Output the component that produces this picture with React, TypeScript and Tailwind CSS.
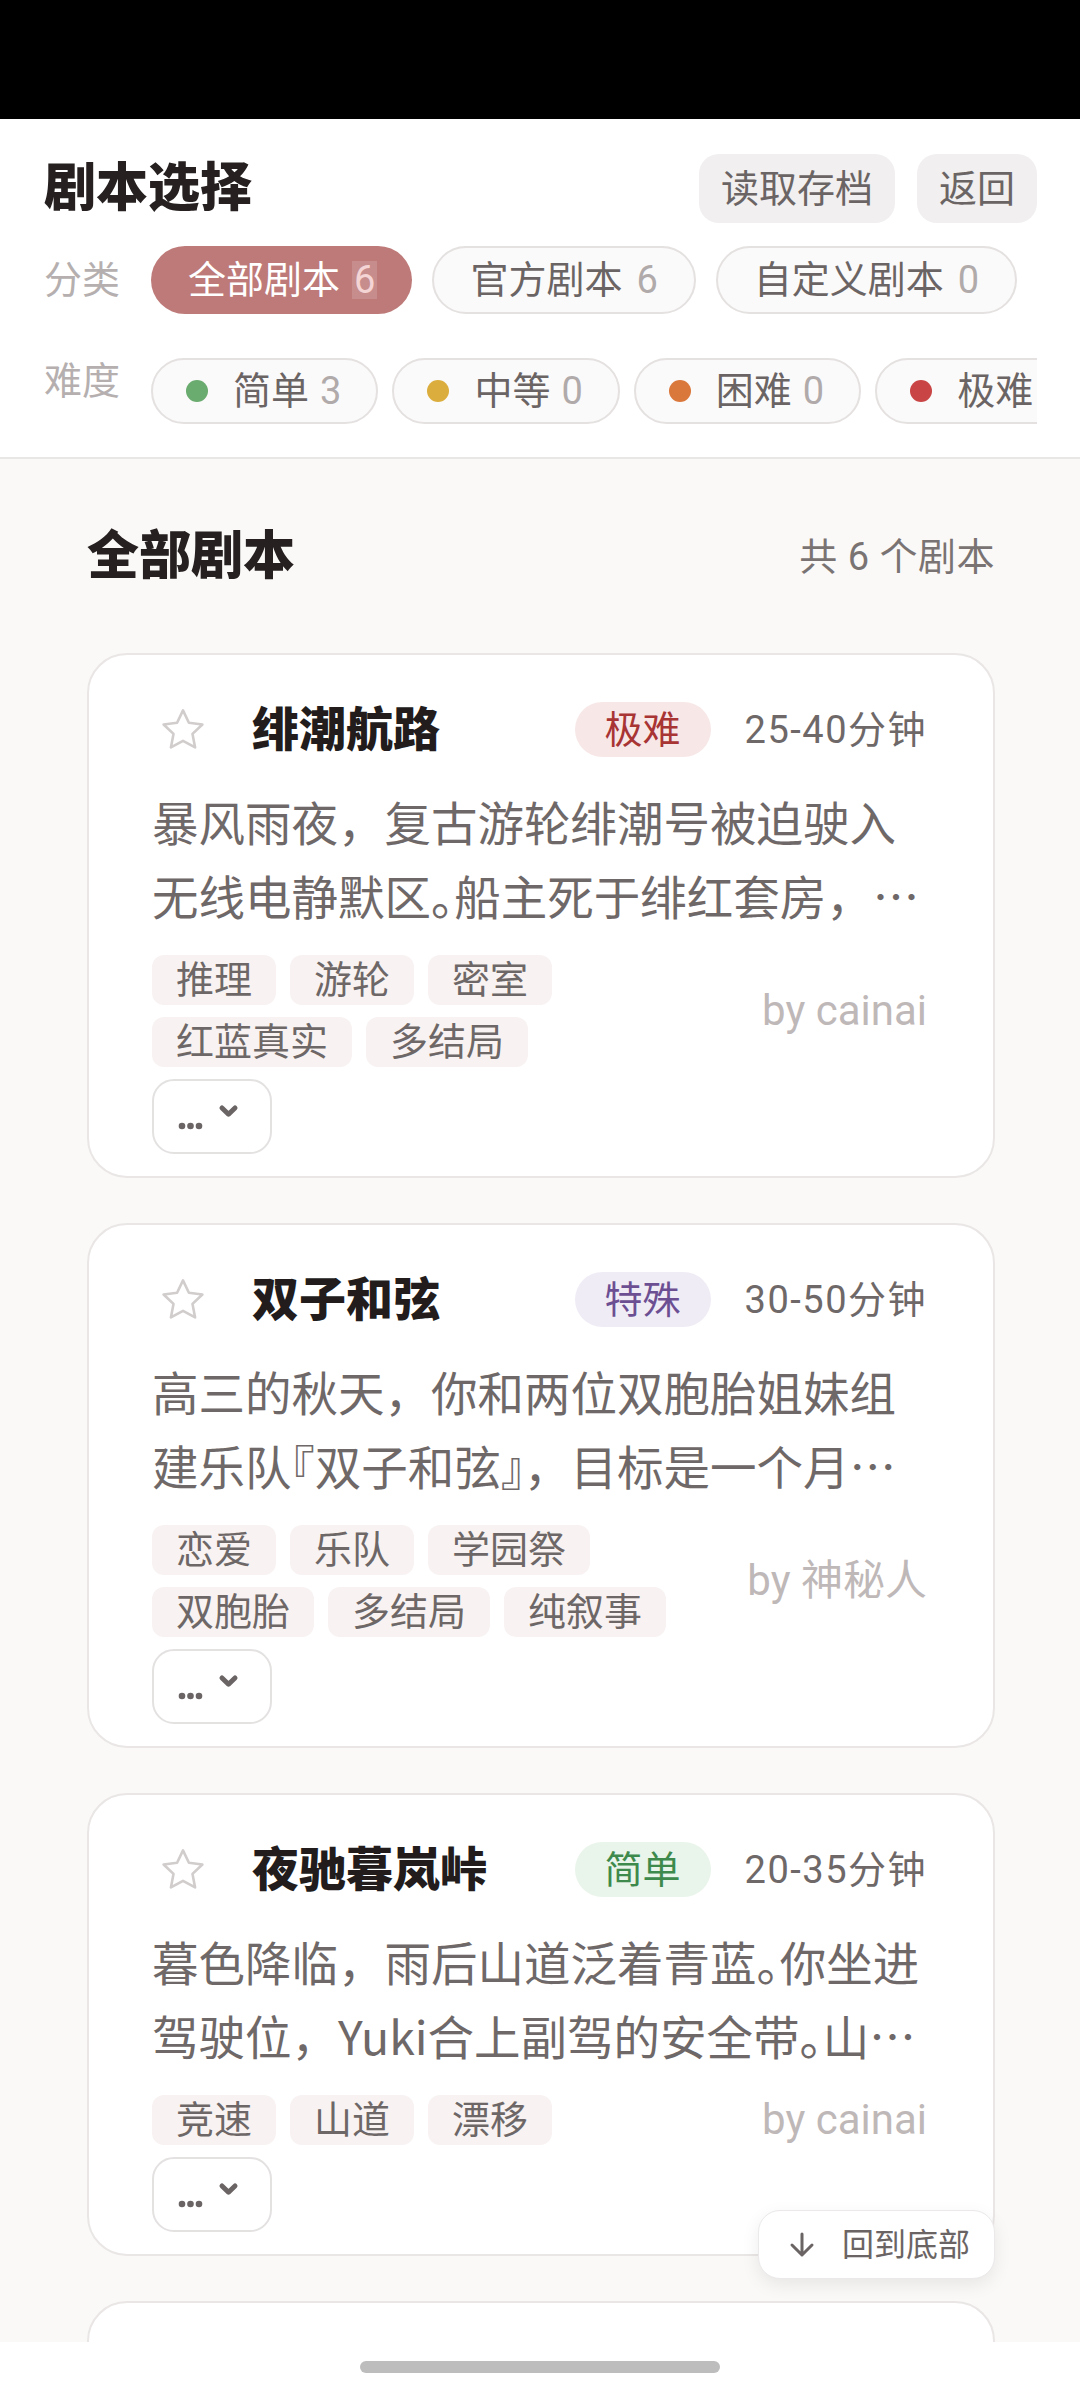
import React from "react";

type Script = {
  title: string;
  diff: string;
  diffCls: string;
  dur: string;
  desc: string;
  tags: string[];
  author: string;
};

const scripts: Script[] = [
  {
    title: "绯潮航路",
    diff: "极难",
    diffCls: "bg-[#f7e7e7] text-[#a83434]",
    dur: "25-40分钟",
    desc: "暴风雨夜，复古游轮绯潮号被迫驶入无线电静默区。船主死于绯红套房，所有人都有嫌疑，真相藏在暴风雨之中。",
    tags: ["推理", "游轮", "密室", "红蓝真实", "多结局"],
    author: "by cainai",
  },
  {
    title: "双子和弦",
    diff: "特殊",
    diffCls: "bg-[#f0ecf6] text-[#6c4f92]",
    dur: "30-50分钟",
    desc: "高三的秋天，你和两位双胞胎姐妹组建乐队『双子和弦』，目标是一个月后的学园祭演出。",
    tags: ["恋爱", "乐队", "学园祭", "双胞胎", "多结局", "纯叙事"],
    author: "by 神秘人",
  },
  {
    title: "夜驰暮岚峠",
    diff: "简单",
    diffCls: "bg-[#e9f4ea] text-[#3e8a4c]",
    dur: "20-35分钟",
    desc: "暮色降临，雨后山道泛着青蓝。你坐进驾驶位，Yuki合上副驾的安全带。山顶的终点线在等待着你们。",
    tags: ["竞速", "山道", "漂移"],
    author: "by cainai",
  },
  {
    title: "雾港来信",
    diff: "中等",
    diffCls: "bg-[#faf1dc] text-[#a67b16]",
    dur: "25-35分钟",
    desc: "一封没有署名的信把你带回了雾气弥漫的港口小镇。",
    tags: ["悬疑", "小镇"],
    author: "by cainai",
  },
];

function Star() {
  return (
    <svg width="48" height="48" viewBox="0 0 24 24" fill="none" stroke="#d2cdcd" strokeWidth="1.3" strokeLinejoin="round">
      <path d="M12 2.2l2.95 6.2 6.75.85-4.95 4.7 1.3 6.75L12 17.4l-6.05 3.3 1.3-6.75-4.95-4.7 6.75-.85z" />
    </svg>
  );
}

function Desc({ text }: { text: string }) {
  const parts = text.split(/([。『』])/);
  return (
    <p className="mt-[27px] font-['Noto_Sans_CJK_SC','Roboto',sans-serif] text-[46.5px] leading-[74px] text-[#6f6868] line-clamp-2">
      {parts.map((p, i) =>
        /^[。『』]$/.test(p) ? (
          <span key={i} className="[font-feature-settings:'halt']">
            {p}
          </span>
        ) : (
          <React.Fragment key={i}>{p}</React.Fragment>
        )
      )}
    </p>
  );
}

function Card({ s }: { s: Script }) {
  return (
    <div className="shrink-0 bg-white border-2 border-[#e9e6e5] rounded-[40px] pt-[47px] pb-[22px] pl-[63px] pr-[66px]">
      <div className="flex items-center h-[55px]">
        <div className="ml-[7px] w-[48px] h-[48px] shrink-0">
          <Star />
        </div>
        <h2 className="ml-[45px] flex-1 text-[47px] font-black text-[#221c1c] leading-none whitespace-nowrap">
          {s.title}
        </h2>
        <span className={`h-[55px] px-[30px] rounded-full flex items-center text-[38px] leading-none ${s.diffCls}`}>
          {s.diff}
        </span>
        <span className="ml-[34px] text-[38px] tracking-[1.5px] text-[#6e6868] leading-none whitespace-nowrap">{s.dur}</span>
      </div>
      <Desc text={s.desc} />
      <div className="mt-[23px] flex items-center gap-[30px]">
        <div className="flex-1 flex flex-wrap gap-x-[14px] gap-y-[12px]">
          {s.tags.map((t) => (
            <span
              key={t}
              className="h-[50px] px-[24px] rounded-[12px] bg-[#f8f3f2] text-[38px] leading-[50px] text-[#6e6767] flex items-center"
            >
              {t}
            </span>
          ))}
        </div>
        <span className="shrink-0 text-[42px] leading-none text-[#bfb8b8]">{s.author}</span>
      </div>
      <button className="mt-[12px] w-[120px] h-[75px] border-2 border-[#e4e1e1] rounded-[22px] flex items-center justify-center pr-[6px]">
        <svg width="62" height="30" viewBox="0 0 62 30">
          <circle cx="4" cy="24" r="3.3" fill="#6b6464" />
          <circle cx="12.5" cy="24" r="3.3" fill="#6b6464" />
          <circle cx="21" cy="24" r="3.3" fill="#6b6464" />
          <path d="M44 6l6.5 6.2L57 6" fill="none" stroke="#6b6464" strokeWidth="5" strokeLinecap="round" strokeLinejoin="round" />
        </svg>
      </button>
    </div>
  );
}

const cats = [
  { name: "全部剧本", count: "6", active: true },
  { name: "官方剧本", count: "6" },
  { name: "自定义剧本", count: "0" },
  { name: "收藏", count: "0" },
];

const diffs = [
  { name: "简单", count: "3", dot: "bg-[#6aab6f]" },
  { name: "中等", count: "0", dot: "bg-[#dbad3d]" },
  { name: "困难", count: "0", dot: "bg-[#da773a]" },
  { name: "极难", count: "1", dot: "bg-[#c94545]" },
  { name: "特殊", count: "1", dot: "bg-[#7f5fa8]" },
];

export default function App() {
  return (
    <div className="font-['Roboto','Noto_Sans_CJK_SC',sans-serif] w-[1080px] h-[2392px] relative overflow-hidden flex flex-col bg-[#faf9f8]">
      <div className="h-[119px] shrink-0 bg-black" />

      <header className="shrink-0 bg-white border-b-2 border-[#e9e7e6] pt-[35px] pb-[33px] pl-[44px] pr-[43px]">
        <div className="flex items-center justify-between h-[69px]">
          <h1 className="text-[52px] font-black text-[#262020] leading-none">剧本选择</h1>
          <div className="flex gap-[22px]">
            <button className="h-[69px] px-[22px] rounded-[20px] bg-[#f1efef] text-[38px] leading-none text-[#6b6464]">
              读取存档
            </button>
            <button className="h-[69px] px-[22px] rounded-[20px] bg-[#f1efef] text-[38px] leading-none text-[#6b6464]">
              返回
            </button>
          </div>
        </div>

        <div className="mt-[23px] flex items-center gap-[29px]">
          <span className="shrink-0 w-[78px] text-[38px] leading-none text-[#b5afaf]">分类</span>
          <div className="flex-1 overflow-hidden flex gap-[20px]">
            {cats.map((c) =>
              c.active ? (
                <span
                  key={c.name}
                  className="shrink-0 h-[68px] pl-[37px] pr-[35px] rounded-full bg-[#bd7a78] text-white text-[38px] leading-none flex items-center gap-[12px]"
                >
                  {c.name}
                  <span className="px-[2px] bg-white/15 text-[#f4d4d4]">{c.count}</span>
                </span>
              ) : (
                <span
                  key={c.name}
                  className="shrink-0 h-[68px] px-[36px] rounded-full border-2 border-[#e4e1e0] bg-[#fbfafa] text-[#6b6464] text-[38px] leading-none flex items-center gap-[14px]"
                >
                  {c.name}
                  <span className="text-[#b0aaaa]">{c.count}</span>
                </span>
              )
            )}
          </div>
        </div>

        <div className="mt-[44px] flex items-start gap-[29px]">
          <span className="shrink-0 w-[78px] mt-[4px] text-[38px] leading-[38px] text-[#b5afaf]">难度</span>
          <div className="flex-1 overflow-hidden flex gap-[14px]">
            {diffs.map((d) => (
              <span
                key={d.name}
                className="shrink-0 h-[66px] pl-[33px] pr-[35px] rounded-full border-2 border-[#e4e1e0] bg-[#fbfafa] text-[#6b6464] text-[38px] leading-none flex items-center"
              >
                <span className={`w-[22px] h-[22px] rounded-full ${d.dot}`} />
                <span className="ml-[25px]">{d.name}</span>
                <span className="ml-[11px] text-[#b0aaaa]">{d.count}</span>
              </span>
            ))}
          </div>
        </div>
      </header>

      <main className="flex-1 min-h-0 overflow-hidden pl-[87px] pr-[85px]">
        <div className="mt-[63px] h-[70px] flex items-center justify-between">
          <h2 className="text-[52px] font-black text-[#262020] leading-none">全部剧本</h2>
          <span className="text-[38px] tracking-[0.5px] text-[#7a7373] leading-none">共 6 个剧本</span>
        </div>
        <div className="mt-[61px] flex flex-col gap-[45px]">
          {scripts.map((s) => (
            <Card key={s.title} s={s} />
          ))}
        </div>
      </main>

      <div className="h-[50px] shrink-0 bg-white flex justify-center pt-[19px]">
        <div className="w-[360px] h-[12px] rounded-full bg-[#bdbdbd]" />
      </div>

      <button className="absolute left-[758px] top-[2210px] w-[237px] h-[69px] bg-white rounded-[22px] border border-[#ebe9e9] shadow-[0_6px_18px_rgba(0,0,0,0.08)] flex items-center pl-[29px] gap-[26px]">
        <svg width="28" height="26" viewBox="0 0 28 26" fill="none" stroke="#6b6464" strokeWidth="3" strokeLinecap="round" strokeLinejoin="round">
          <path d="M14 2v21M4 13l10 10 10-10" />
        </svg>
        <span className="text-[32px] leading-none text-[#6b6464]">回到底部</span>
      </button>
    </div>
  );
}
